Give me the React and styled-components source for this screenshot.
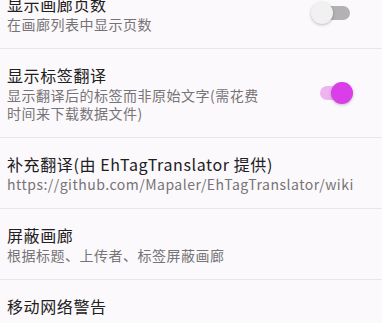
import styled, { createGlobalStyle } from "styled-components";

const Global = createGlobalStyle`
    html, body {
        margin: 0;
        padding: 0;
        background-color: #fcf9fc;
        overflow: hidden;
    }
`

const List = styled.div`
    margin-top: -22px;
    font-family: "Noto Sans CJK SC", "Noto Sans", sans-serif;
    background-color: #fcf9fc;
`

const Row = styled.div`
    display: flex;
    align-items: center;
    padding: 15px 29px 15px 7px;
    border-bottom: 1.5px solid #ebe5eb;
`

const Texts = styled.div`
    flex: 1;
    min-width: 0;
`

const Title = styled.div`
    font-size: 16px;
    line-height: 22px;
    color: #202020;
    letter-spacing: 0.6px;
`

const Summary = styled.div`
    font-size: 14px;
    line-height: 18px;
    color: #767476;
    letter-spacing: 0.5px;
    max-width: ${props => props.$wrap ? "256px" : "none"};
`

const Switch = styled.div`
    position: relative;
    width: 42px;
    height: 22px;
    flex-shrink: 0;
`

const Track = styled.div`
    position: absolute;
    left: 9px;
    top: 4px;
    width: 30px;
    height: 14px;
    border-radius: 7px;
    background-color: ${props => props.$on ? "#efb3f0" : "#b3b1b3"};
`

const Thumb = styled.div`
    position: absolute;
    top: 0;
    left: ${props => props.$on ? "20px" : "0"};
    width: 22px;
    height: 22px;
    border-radius: 50%;
    background-color: ${props => props.$on ? "#d93ee8" : "#f2f1f2"};
    box-shadow: 0 1px 3px rgba(0, 0, 0, 0.25);
`

function Toggle({ on }) {
    return (
        <Switch>
            <Track $on={on} />
            <Thumb $on={on} />
        </Switch>
    )
}

export default function App() {
    return (
        <>
            <Global />
            <List>
                <Row>
                    <Texts>
                        <Title>显示画廊页数</Title>
                        <Summary>在画廊列表中显示页数</Summary>
                    </Texts>
                    <Toggle on={false} />
                </Row>
                <Row>
                    <Texts>
                        <Title>显示标签翻译</Title>
                        <Summary $wrap>显示翻译后的标签而非原始文字(需花费时间来下载数据文件)</Summary>
                    </Texts>
                    <Toggle on={true} />
                </Row>
                <Row>
                    <Texts>
                        <Title>补充翻译(由 EhTagTranslator 提供)</Title>
                        <Summary>https://github.com/Mapaler/EhTagTranslator/wiki</Summary>
                    </Texts>
                </Row>
                <Row>
                    <Texts>
                        <Title>屏蔽画廊</Title>
                        <Summary>根据标题、上传者、标签屏蔽画廊</Summary>
                    </Texts>
                </Row>
                <Row>
                    <Texts>
                        <Title>移动网络警告</Title>
                    </Texts>
                </Row>
            </List>
        </>
    )
}
